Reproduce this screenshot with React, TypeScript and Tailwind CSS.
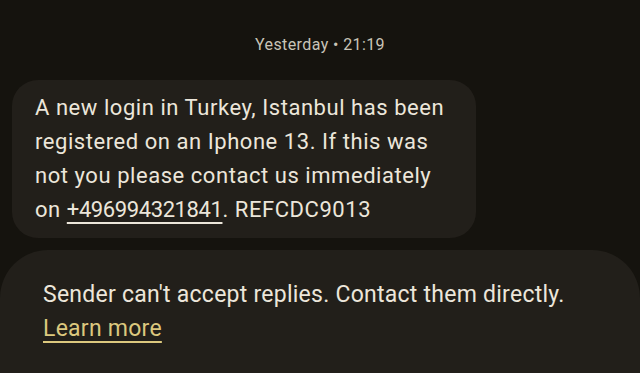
export default function App() {
  return (
    <div
      className="w-[640px] h-[373px] overflow-hidden bg-[#15130e] flex flex-col"
      style={{ fontFamily: 'Roboto, "Noto Sans", sans-serif' }}
    >
      <div className="pt-[34px] text-center text-[16px] leading-[22px] tracking-[0.4px] text-[#c9c4b7]">
        Yesterday • 21:19
      </div>
      <div className="pl-3 pt-[24px]">
        <div className="w-[464px] h-[158px] rounded-[26px] bg-[#221f1a] pl-[23px] pt-[11px] text-[22px] leading-[34px] text-[#ece6da] tracking-[0.55px]">
          <p>A new login in Turkey, Istanbul has been</p>
          <p>registered on an Iphone 13. If this was</p>
          <p>not you please contact us immediately</p>
          <p>
            on <span className="underline underline-offset-[5px] decoration-[1.5px] tracking-[-0.4px]">+496994321841</span>. REFCDC9013
          </p>
        </div>
      </div>
      <div className="mt-[12px] flex-1 rounded-t-[48px] bg-[#221f1a] pl-[43px] pt-[28px] text-[23px] leading-[34px] tracking-[0.25px]">
        <p className="text-[#ece6da]">
          Sender can't accept replies. Contact them directly.
        </p>
        <a className="text-[#dcc87e] underline underline-offset-[5px] decoration-[1.5px]">
          Learn more
        </a>
      </div>
    </div>
  );
}
